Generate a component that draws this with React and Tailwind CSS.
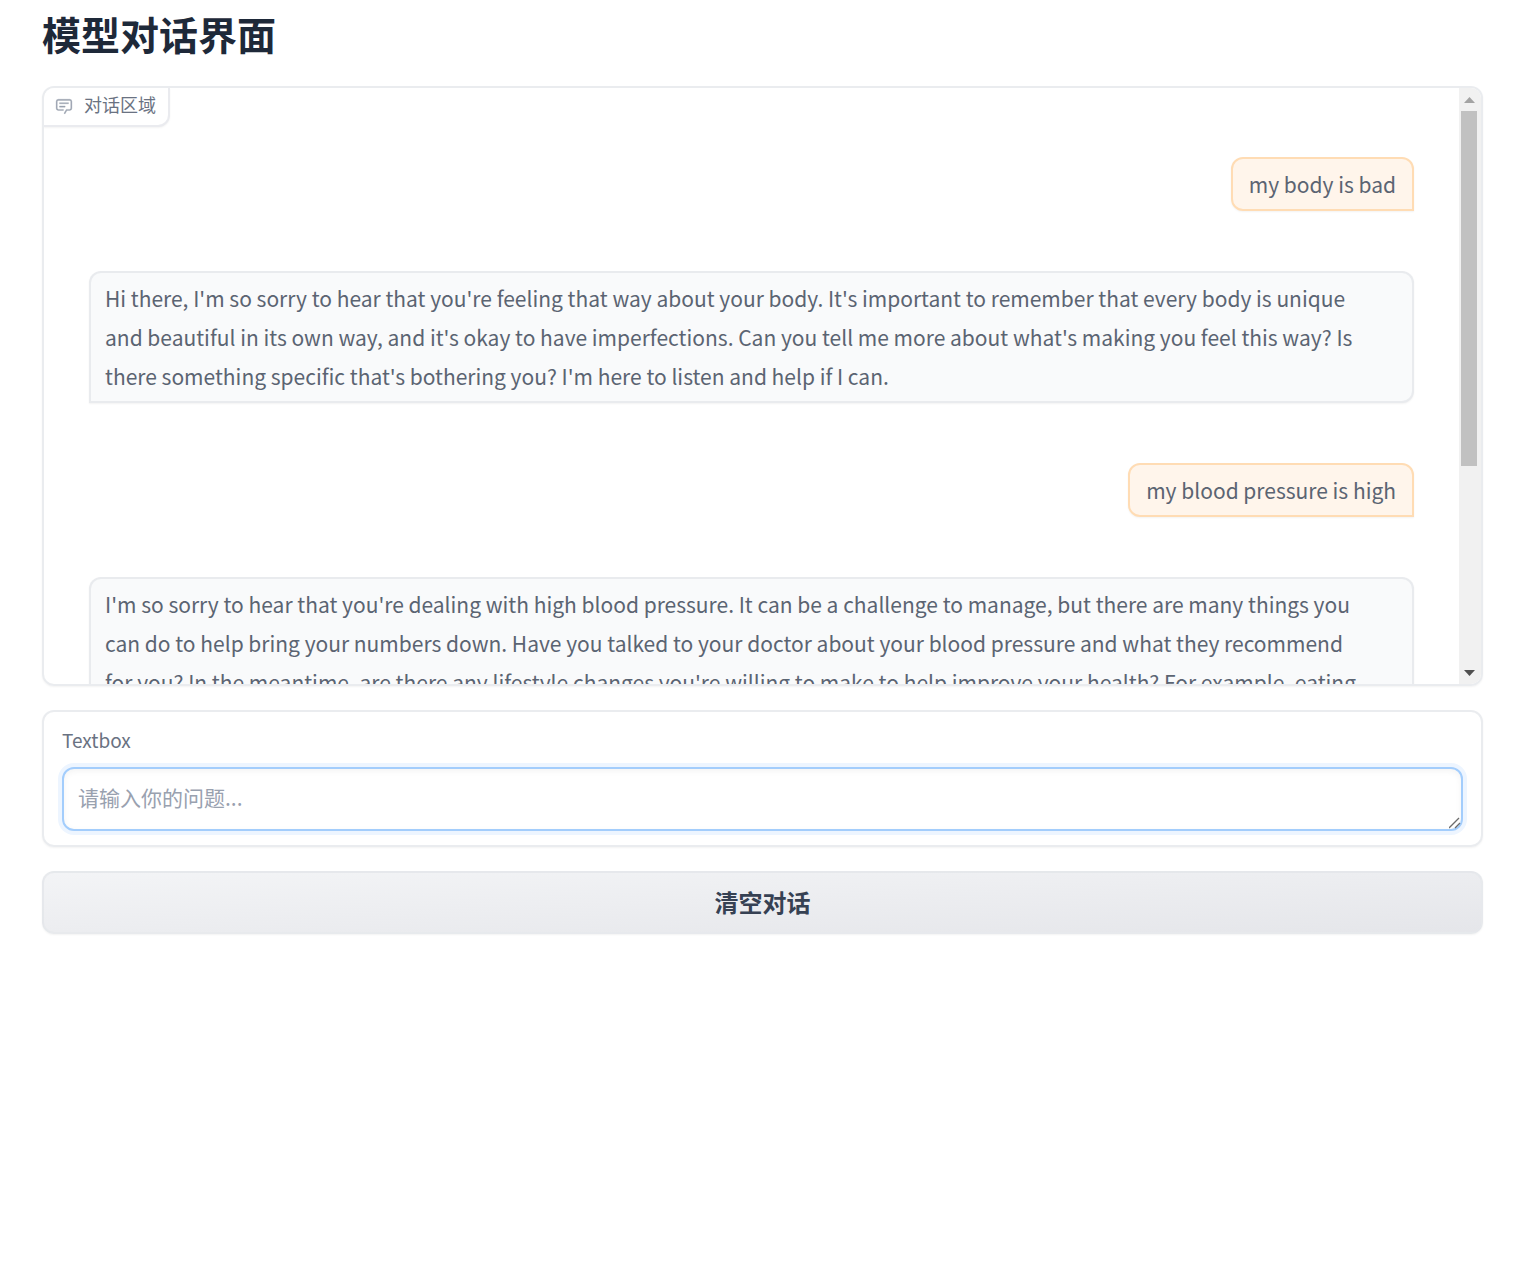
const messages = [
  { from: "user", lines: ["my body is bad"] },
  {
    from: "bot",
    lines: [
      "Hi there, I'm so sorry to hear that you're feeling that way about your body. It's important to remember that every body is unique",
      "and beautiful in its own way, and it's okay to have imperfections. Can you tell me more about what's making you feel this way? Is",
      "there something specific that's bothering you? I'm here to listen and help if I can.",
    ],
  },
  { from: "user", lines: ["my blood pressure is high"] },
  {
    from: "bot",
    lines: [
      "I'm so sorry to hear that you're dealing with high blood pressure. It can be a challenge to manage, but there are many things you",
      "can do to help bring your numbers down. Have you talked to your doctor about your blood pressure and what they recommend",
      "for you? In the meantime, are there any lifestyle changes you're willing to make to help improve your health? For example, eating",
    ],
  },
];

function ChatIcon() {
  return (
    <svg className="size-[18px] text-gray-400" viewBox="0 0 32 32" fill="currentColor" stroke="currentColor" strokeWidth="0.6" aria-hidden="true">
      <path d="M17.74 30L16 29l4-7h6a2 2 0 0 0 2-2V8a2 2 0 0 0-2-2H6a2 2 0 0 0-2 2v12a2 2 0 0 0 2 2h9v2H6a4 4 0 0 1-4-4V8a4 4 0 0 1 4-4h20a4 4 0 0 1 4 4v12a4 4 0 0 1-4 4h-4.84Z" />
      <path d="M8 10h16v2H8zm0 6h10v2H8z" />
    </svg>
  );
}

function Message({ from, lines }) {
  const look =
    from === "user"
      ? "self-end rounded-br-none border-[#ffdcb4] bg-[#fff5eb] px-4"
      : "w-full rounded-bl-none border-gray-200/80 bg-[#f9fafb] px-[14px]";
  return (
    <div className={`shrink-0 rounded-xl border-2 pt-[6px] pb-[5px] text-[21px] leading-[39px] text-[#5b6472] shadow-xs ${look}`}>
      {lines.map((line) => (
        <p key={line}>{line}</p>
      ))}
    </div>
  );
}

function ScrollTrack() {
  return (
    <div className="flex w-[22px] shrink-0 flex-col bg-[#f1f1f1] pr-[2px]">
      <button type="button" aria-label="Scroll up" className="flex h-[23px] w-full items-center justify-center">
        <svg className="h-[6px] w-[11px] text-[#a3a3a3]" viewBox="0 0 11 6" fill="currentColor">
          <path d="M0 6L5.500 0L11 6Z" />
        </svg>
      </button>
      <div className="flex w-full flex-1 flex-col items-center">
        <div className="h-[355px] w-4 bg-[#c1c1c1]" />
      </div>
      <button type="button" aria-label="Scroll down" className="flex h-[23px] w-full items-center justify-center">
        <svg className="h-[6px] w-[11px] text-[#505050]" viewBox="0 0 11 6" fill="currentColor">
          <path d="M0 0L5.500 6L11 0Z" />
        </svg>
      </button>
    </div>
  );
}

export default function App() {
  return (
    <main className="flex min-h-screen flex-col bg-white pt-[6px] pr-[39px] pl-[42px] font-['Noto_Sans_CJK_SC','Noto_Sans',sans-serif]">
      <h1 className="text-[39px] leading-[54px] font-bold text-gray-800">模型对话界面</h1>

      <section aria-label="对话区域" className="relative mt-[26px] flex h-[600px] overflow-hidden rounded-xl border-2 border-gray-200/80 shadow-xs">
        <div className="absolute top-0 left-0 flex h-[39px] items-center gap-[11px] rounded-br-xl border-r-2 border-b-2 border-gray-200/80 bg-white pr-3 pb-[2px] pl-[11px] text-[18px] text-gray-500 shadow-xs">
          <ChatIcon />
          <span className="pb-[2px] leading-[27px]">对话区域</span>
        </div>
        <div className="flex min-w-0 flex-1 flex-col gap-[60px] overflow-hidden pt-[69px] pr-[45px] pl-[45px]">
          {messages.map((message) => (
            <Message key={message.lines[0]} {...message} />
          ))}
        </div>
        <ScrollTrack />
      </section>

      <section className="mt-6 rounded-xl border-2 border-gray-200/80 px-[18px] pt-[13px] pb-[14px] shadow-xs">
        <label htmlFor="question" className="block text-[19px] leading-[30px] text-gray-500">
          Textbox
        </label>
        <div className="relative mt-3 flex">
          <textarea
            id="question"
            rows={1}
            placeholder="请输入你的问题..."
            className="h-16 w-full resize-none overflow-hidden rounded-xl border-2 border-[#a3cdfc] bg-white px-[14px] py-3 text-[21px] leading-[32px] text-gray-800 shadow-[0_0_0_4px_#edf5ff,inset_0_2px_6px_0_#0000000d] outline-none placeholder:text-gray-400"
          />
          <svg className="absolute right-[2px] bottom-[2px] size-3" viewBox="0 0 12 12" fill="none" stroke="#6b6b6b" strokeWidth="1.3" aria-hidden="true">
            <path d="M0 11L10 1M6 11L11 6" />
          </svg>
        </div>
      </section>

      <button type="button" className="mt-6 h-[63px] rounded-xl border-2 border-gray-200/80 bg-linear-to-br from-gray-100 to-[#e5e6ea] pb-[2px] text-[24px] leading-[36px] font-bold text-gray-700 shadow-xs">
        清空对话
      </button>
    </main>
  );
}
